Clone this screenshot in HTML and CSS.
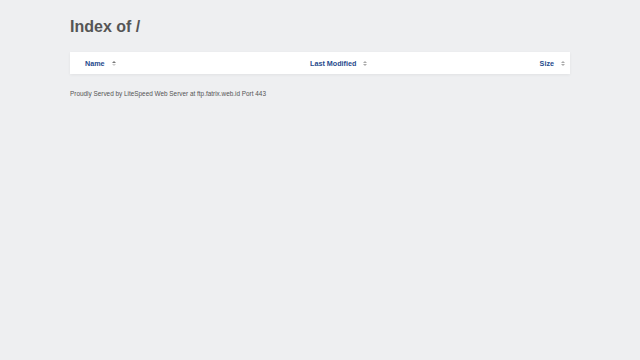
FILE: index.html
```html
<!DOCTYPE html>
<html lang="en">
<head>
  <meta charset="UTF-8">
  <title>Index of /</title>
  <link rel="stylesheet" href="styles.css">
</head>
<body>
  <div id="wrapper">
    <h1>Index of /</h1>

    <table id="listing">
      <thead>
        <tr>
          <th class="col-name">
            <a href="#">Name</a>
            <svg class="sort" width="4" height="5" viewBox="0 0 4 5"><path d="M2 0 L4 2 L0 2 Z" fill="#777"/><path d="M2 5 L4 3 L0 3 Z" fill="#ccc"/></svg>
          </th>
          <th class="col-date">
            <a href="#">Last Modified</a>
            <svg class="sort" width="4" height="5" viewBox="0 0 4 5"><path d="M2 0 L4 2 L0 2 Z" fill="#aaa"/><path d="M2 5 L4 3 L0 3 Z" fill="#aaa"/></svg>
          </th>
          <th class="col-size">
            <a href="#">Size</a>
            <svg class="sort" width="4" height="5" viewBox="0 0 4 5"><path d="M2 0 L4 2 L0 2 Z" fill="#aaa"/><path d="M2 5 L4 3 L0 3 Z" fill="#aaa"/></svg>
          </th>
        </tr>
      </thead>
    </table>

    <p id="footer">Proudly Served by LiteSpeed Web Server at ftp.fatrix.web.id Port 443</p>
  </div>
</body>
</html>
```

FILE: styles.css
```css
* {
  margin: 0;
  padding: 0;
  box-sizing: border-box;
}

body {
  font-family: "Liberation Sans", Arial, sans-serif;
  background-color: #eeeff1;
  color: #555;
  height: 100vh;
  overflow: hidden;
}

#wrapper {
  width: 500px;
  margin: 0 auto;
  padding-top: 17px;
}

h1 {
  font-size: 16px;
  font-weight: bold;
  color: #555;
  height: 19px;
  line-height: 19px;
  margin-bottom: 16px;
}

#listing {
  width: 100%;
  border-collapse: collapse;
  background-color: #fff;
  box-shadow: 0 1px 3px rgba(0, 0, 0, 0.06);
}

#listing th {
  height: 22px;
  font-size: 7.2px;
  font-weight: bold;
  white-space: nowrap;
  vertical-align: middle;
}

#listing th a {
  color: #1f4a8c;
  text-decoration: none;
}

.sort {
  vertical-align: middle;
  margin-left: 5px;
}

.col-name {
  text-align: left;
  padding-left: 15px;
  width: 240px;
}

.col-date {
  text-align: left;
}

.col-size {
  text-align: right;
  padding-right: 5px;
}

#footer {
  font-size: 6.4px;
  color: #555;
  margin-top: 16px;
}
```
